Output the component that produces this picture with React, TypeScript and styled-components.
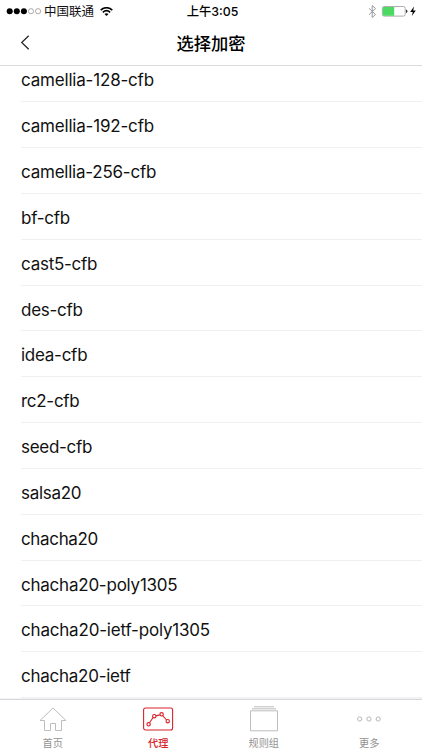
import React from "react";
import styled, { createGlobalStyle } from "styled-components";

const GlobalStyle = createGlobalStyle`
  * { box-sizing: border-box; }
  body { margin: 0; background: #fff; }
`;

const Screen = styled.div`
  width: 422px;
  height: 750px;
  display: flex;
  flex-direction: column;
  overflow: hidden;
  background: #fff;
  color: #111;
  font-family: Inter, "Noto Sans CJK SC", sans-serif;
`;

const StatusBar = styled.header`
  height: 22px;
  flex: none;
  display: grid;
  grid-template-columns: 1fr auto 1fr;
  align-items: center;
  padding: 0 5px 0 6px;
  font-size: 12.3px;
  line-height: 22px;
`;

const StatusGroup = styled.div<{ $end?: boolean }>`
  display: flex;
  align-items: center;
  height: 22px;
  justify-content: ${(p) => (p.$end ? "flex-end" : "flex-start")};
`;

const Carrier = styled.span`
  margin: 1px 6px 0 2px;
  font-size: 12.5px;
`;

const Time = styled.span`
  padding: 1px 0 0 2px;
  font-weight: 500;
  color: #000;
`;

const NavBar = styled.nav`
  height: 44px;
  flex: none;
  display: grid;
  grid-template-columns: 50px 1fr 50px;
  align-items: center;
  border-bottom: 1px solid #dadada;
`;

const BackButton = styled.button`
  display: flex;
  align-items: center;
  height: 42px;
  padding: 0 0 2px 20px;
  border: 0;
  background: none;
`;

const Title = styled.h1`
  margin: 0;
  text-align: center;
  font-size: 17.3px;
  line-height: 42px;
  font-weight: 500;
  color: #000;
`;

const List = styled.ul`
  flex: 1;
  min-height: 0;
  overflow: hidden;
  margin: 0;
  padding: 0 0 1px 21px;
  list-style: none;
  display: flex;
  flex-direction: column;
  justify-content: flex-end;
`;

const Row = styled.li<{ $spacing: number }>`
  flex: none;
  height: 45.83px;
  border-bottom: 1px solid #f0f0f2;
  font-size: 17px;
  line-height: 48.4px;
  letter-spacing: ${(p) => p.$spacing}px;
  white-space: nowrap;
`;

const TabBar = styled.footer`
  height: 51px;
  flex: none;
  display: grid;
  grid-template-columns: repeat(4, 1fr);
  border-top: 1px solid #d8d8dc;
  box-shadow: 0 -1px 0 #f3f3f5;
`;

const Tab = styled.button<{ $active?: boolean }>`
  display: flex;
  flex-direction: column;
  align-items: center;
  padding: 5px 0 0;
  border: 0;
  background: none;
  font-family: inherit;
  font-size: 10.2px;
  line-height: 16px;
  font-weight: ${(p) => (p.$active ? 500 : 400)};
  color: ${(p) => (p.$active ? "#d8232a" : "#929292")};
`;

const TabIcon = styled.svg`
  width: 32px;
  height: 30px;
  fill: none;
`;

const ciphers: { name: string; spacing: number }[] = [
  { name: "camellia-128-cfb", spacing: -0.19 },
  { name: "camellia-192-cfb", spacing: -0.19 },
  { name: "camellia-256-cfb", spacing: -0.23 },
  { name: "bf-cfb", spacing: -0.25 },
  { name: "cast5-cfb", spacing: -0.25 },
  { name: "des-cfb", spacing: -0.25 },
  { name: "idea-cfb", spacing: -0.26 },
  { name: "rc2-cfb", spacing: -0.28 },
  { name: "seed-cfb", spacing: -0.28 },
  { name: "salsa20", spacing: -0.28 },
  { name: "chacha20", spacing: -0.34 },
  { name: "chacha20-poly1305", spacing: -0.23 },
  { name: "chacha20-ietf-poly1305", spacing: -0.19 },
  { name: "chacha20-ietf", spacing: -0.26 },
];

const Signal = () => (
  <svg width="36" height="10" viewBox="0 0 36 10">
    {[3.7, 10.8, 17.9].map((x) => (
      <circle key={x} cx={x} cy="4.2" r="3" fill="#000" />
    ))}
    {[25, 32.1].map((x) => (
      <circle key={x} cx={x} cy="4.2" r="2.6" fill="none" stroke="#777" strokeWidth=".6" />
    ))}
  </svg>
);

const Wifi = () => (
  <svg width="13" height="10" viewBox="0 0 13 10" fill="none" stroke="#000" strokeWidth="1.6">
    <path d="M.7 3.1Q6.5-1.7 12.3 3.1M2.8 5.3Q6.5 2.1 10.2 5.3" />
    <path d="M4.5 6.9Q6.5 5.4 8.5 6.9L6.5 9Z" fill="#000" stroke="none" />
  </svg>
);

const Bluetooth = () => (
  <svg width="9" height="14" viewBox="0 0 9 14" fill="none" stroke="#8c8c91" strokeWidth=".9">
    <path d="M1 3.3 7.5 9.5 4.2 12.5V.6L7.5 3.5 1 9.7" />
  </svg>
);

const Battery = () => (
  <svg width="40" height="14" viewBox="0 0 40 14">
    <rect x="5.4" y="1.5" width="22.8" height="9.6" rx="1.8" fill="#fff" stroke="#8a8a8a" strokeWidth=".7" />
    <path d="M7 1.9H17.2V10.7H7Q5.8 10.7 5.8 9.5V3.1Q5.8 1.9 7 1.9Z" fill="#4cd964" />
    <path d="M29 4.5Q30.4 4.7 30.4 6.3T29 8.1Z" fill="#333" />
    <path d="M37 1.5 33.2 7H35.8L34.8 11.1 38.8 5.5H36.2Z" fill="#000" />
  </svg>
);

export default function App() {
  return (
    <>
      <GlobalStyle />
      <Screen>
        <StatusBar>
          <StatusGroup>
            <Signal />
            <Carrier>中国联通</Carrier>
            <Wifi />
          </StatusGroup>
          <Time>上午3:05</Time>
          <StatusGroup $end>
            <Bluetooth />
            <Battery />
          </StatusGroup>
        </StatusBar>
        <NavBar>
          <BackButton aria-label="返回">
            <svg width="10" height="15" viewBox="0 0 10 15" fill="none" stroke="#222" strokeWidth="1.2">
              <path d="M8.7.8 1.7 7.5 8.7 14.2" />
            </svg>
          </BackButton>
          <Title>选择加密</Title>
        </NavBar>
        <List>
          {ciphers.map((c) => (
            <Row key={c.name} $spacing={c.spacing}>
              {c.name}
            </Row>
          ))}
        </List>
        <TabBar>
          <Tab>
            <TabIcon viewBox="0 0 32 30" stroke="#bdbdbd" strokeWidth="1">
              <path d="M7.5 15.5V25.5H13.5V18.5H18.5V25.5H24.5V15.5H29L16 3 3 15.5Z" />
            </TabIcon>
            首页
          </Tab>
          <Tab $active>
            <TabIcon viewBox="0 0 32 30" stroke="#d8232a" strokeWidth="1.1">
              <rect x="1.6" y="3" width="29" height="22" rx="2" />
              <path d="M7.5 17.8 11.3 12.3M14 10.9 17.8 9.9M20.8 10.9 24.6 15" />
              <circle cx="6.6" cy="19.3" r="1.7" />
              <circle cx="12.3" cy="11.2" r="1.7" />
              <circle cx="19.6" cy="9.3" r="1.7" />
              <circle cx="25.7" cy="16.2" r="1.7" />
            </TabIcon>
            代理
          </Tab>
          <Tab>
            <TabIcon viewBox="0 0 32 30" stroke="#bdbdbd" strokeWidth="1">
              <path d="M2.5 5.8H29.5V25.8H2.5ZM4 3.8H28M6 1.8H26" />
            </TabIcon>
            规则组
          </Tab>
          <Tab>
            <TabIcon viewBox="0 0 32 30" stroke="#b8b8b8" strokeWidth="1">
              <circle cx="6.7" cy="14" r="2.1" />
              <circle cx="16" cy="14" r="2.1" />
              <circle cx="25.2" cy="14" r="2.1" />
            </TabIcon>
            更多
          </Tab>
        </TabBar>
      </Screen>
    </>
  );
}
